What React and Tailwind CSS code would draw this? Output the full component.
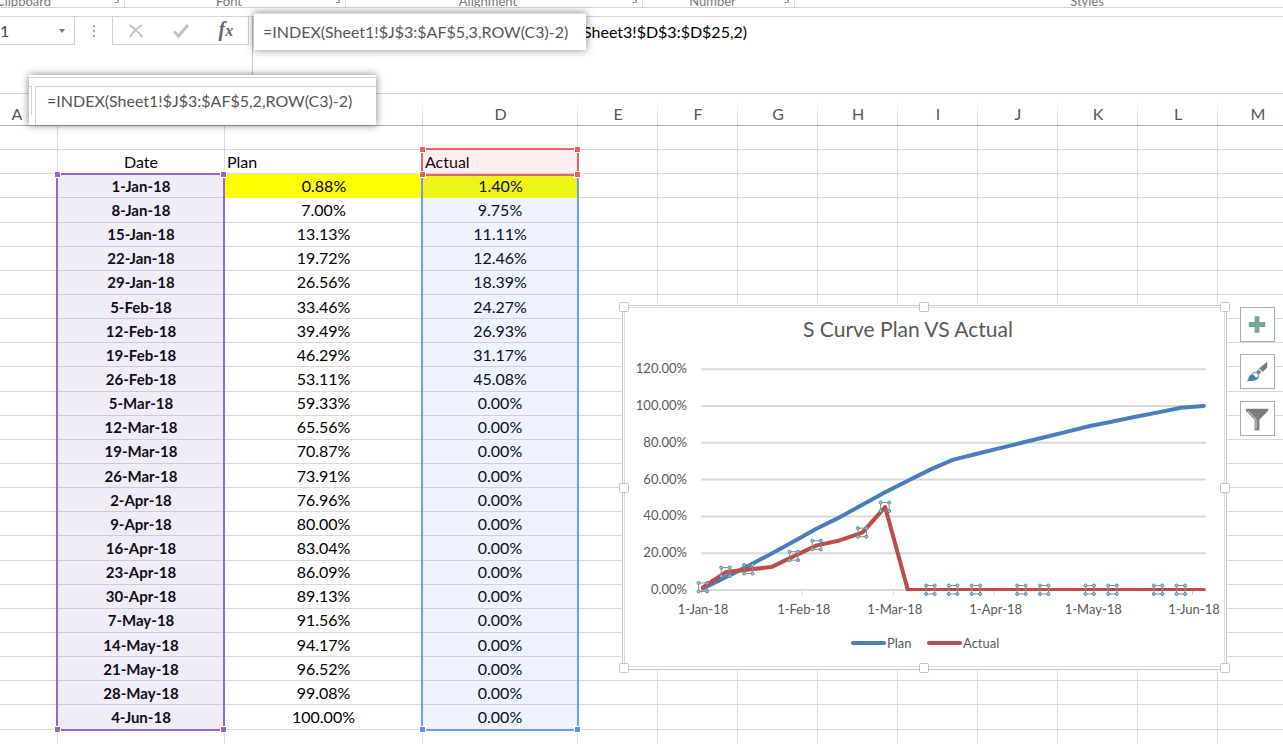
import React from 'react';

const rows = [
  ['1-Jan-18', 0.88, 1.4],
  ['8-Jan-18', 7.0, 9.75],
  ['15-Jan-18', 13.13, 11.11],
  ['22-Jan-18', 19.72, 12.46],
  ['29-Jan-18', 26.56, 18.39],
  ['5-Feb-18', 33.46, 24.27],
  ['12-Feb-18', 39.49, 26.93],
  ['19-Feb-18', 46.29, 31.17],
  ['26-Feb-18', 53.11, 45.08],
  ['5-Mar-18', 59.33, 0],
  ['12-Mar-18', 65.56, 0],
  ['19-Mar-18', 70.87, 0],
  ['26-Mar-18', 73.91, 0],
  ['2-Apr-18', 76.96, 0],
  ['9-Apr-18', 80.0, 0],
  ['16-Apr-18', 83.04, 0],
  ['23-Apr-18', 86.09, 0],
  ['30-Apr-18', 89.13, 0],
  ['7-May-18', 91.56, 0],
  ['14-May-18', 94.17, 0],
  ['21-May-18', 96.52, 0],
  ['28-May-18', 99.08, 0],
  ['4-Jun-18', 100.0, 0],
];

const columns = ['A', 'B', 'C', 'D', 'E', 'F', 'G', 'H', 'I', 'J', 'K', 'L', 'M'];
const emptyColumns = columns.slice(4);
// B and C sit under the formula callout
const coveredColumns = ['B', 'C'];
const cell = 'border-r border-b border-[#d9d9d9] p-0';

const Launcher = () => (
  <svg className="w-2 h-2 shrink-0" viewBox="0 0 8 8" fill="none" stroke="#999">
    <path d="M3 -1l3 3M6.500 -1v4.500H3" />
  </svg>
);

const Ribbon = () => (
  <div className="flex h-2 items-end overflow-hidden border-b border-[#d2d2d2] text-[13px] leading-3 text-[#777]">
    <div className="flex w-[125px] shrink-0 items-end justify-between border-r border-[#ddd] pr-1">
      <span className="-ml-1">Clipboard</span>
      <Launcher />
    </div>
    <div className="flex w-[221px] shrink-0 items-end border-r border-[#ddd] pr-1">
      <span className="flex-1 text-center">Font</span>
      <Launcher />
    </div>
    <div className="flex w-[297px] shrink-0 items-end border-r border-[#ddd] pr-1">
      <span className="flex-1 text-center">Alignment</span>
      <Launcher />
    </div>
    <div className="flex w-[152px] shrink-0 items-end border-r border-[#ddd] pr-1">
      <span className="flex-1 text-center">Number</span>
      <Launcher />
    </div>
    <div className="flex-1 pl-24 text-center">Styles</div>
  </div>
);

const FormulaBar = () => (
  <div className="mt-2 flex h-[78px] items-start border-t border-b border-[#d2d2d2]">
    <div className="flex h-7 w-[75px] shrink-0 items-center justify-between border-r border-b border-[#d2d2d2] pr-2">
      <input aria-label="Name box" defaultValue="1" className="w-10 text-base text-[#444] outline-none" />
      <button aria-label="Show names">
        <svg className="h-2 w-2" viewBox="0 0 8 8">
          <path d="M1 2h6L4 6z" fill="#777" />
        </svg>
      </button>
    </div>
    <div className="flex h-7 w-[37px] shrink-0 flex-col items-center justify-center gap-[3px]">
      <span className="h-0.5 w-0.5 bg-[#aaa]" />
      <span className="h-0.5 w-0.5 bg-[#aaa]" />
      <span className="h-0.5 w-0.5 bg-[#aaa]" />
    </div>
    <div className="flex h-7 w-[137px] shrink-0 items-center justify-around border-x border-b border-[#d2d2d2]">
      <button aria-label="Cancel">
        <svg className="h-4 w-4" viewBox="0 0 16 16" fill="none" stroke="#c3c3c3" strokeWidth="2">
          <path d="M1.500 2C6 5 11 10 14.500 14M14 2C9 5 5 9 2 14" />
        </svg>
      </button>
      <button aria-label="Enter">
        <svg className="h-4 w-4" viewBox="0 0 16 16" fill="none" stroke="#c3c3c3" strokeWidth="3">
          <path d="M1 8.500l4.500 4.500L15 2" />
        </svg>
      </button>
      <button
        aria-label="Insert function"
        className="font-['Liberation_Serif',_serif] text-xl leading-5 font-bold text-[#666] italic"
      >
        f<span className="text-base">x</span>
      </button>
    </div>
    <div className="ml-[3px] h-[58px] flex-1 border-l border-[#c8c8c8]">
      <input
        aria-label="Formula"
        defaultValue="Sheet3!$D$3:$D$25,2)"
        className="h-7 w-full pl-[330px] text-base text-black outline-none"
      />
    </div>
  </div>
);

const Handle = ({ className }) => <span className={`absolute h-[5px] w-[5px] outline outline-white ${className}`} />;

const Range = ({ className, handle, corners }) => (
  <div className={`pointer-events-none absolute border-2 ${className}`}>
    {corners.includes('tl') && <Handle className={`-top-[3px] -left-[3px] ${handle}`} />}
    {corners.includes('tr') && <Handle className={`-top-[3px] -right-[3px] ${handle}`} />}
    {corners.includes('bl') && <Handle className={`-bottom-[3px] -left-[3px] ${handle}`} />}
    {corners.includes('br') && <Handle className={`-right-[3px] -bottom-[3px] ${handle}`} />}
  </div>
);

const Sheet = () => (
  <table className="h-[660px] w-[1298px] min-w-full table-fixed border-separate border-spacing-0 text-base leading-5 text-black">
    <colgroup>
      <col className="w-[58px]" />
      <col className="w-[167px]" />
      <col className="w-[198px]" />
      <col className="w-[155px]" />
      {emptyColumns.map((name) => (
        <col key={name} />
      ))}
    </colgroup>
    <thead>
      <tr className="h-8">
        {columns.map((name) => (
          <th
            key={name}
            className={`relative border-b border-[#ababab] p-0 pt-2 font-normal text-[#555] ${name === 'A' ? 'pr-6' : ''}`}
          >
            {!coveredColumns.includes(name) && name}
            <span className="absolute right-0 bottom-0 h-6 w-px bg-linear-to-b from-white to-[#ccc]" />
          </th>
        ))}
      </tr>
    </thead>
    <tbody>
      <tr className="h-6">
        {columns.map((name) => (
          <td key={name} className={cell} />
        ))}
      </tr>
      <tr className="h-6">
        <td className={cell} />
        <td className={`${cell} text-center`}>Date</td>
        <td className={`${cell} pl-[2px]`}>Plan</td>
        <td className={`${cell} pl-[2px]`}>Actual</td>
        {emptyColumns.map((name) => (
          <td key={name} className={cell} />
        ))}
      </tr>
      {rows.map(([date, plan, actual], i) => (
        <tr key={date} className="h-6">
          <td className={cell} />
          <td className={`${cell} text-center text-[15px] font-bold`}>{date}</td>
          <td className={`p-0 text-center ${i === 0 ? 'bg-[#ffff00]' : 'border-r border-b border-[#d9d9d9]'}`}>
            {plan.toFixed(2)}%
          </td>
          <td className={`p-0 text-center ${i === 0 ? 'bg-[#ffff00]' : 'border-r border-b border-[#d9d9d9]'}`}>
            {actual.toFixed(2)}%
          </td>
          {emptyColumns.map((name) => (
            <td key={name} className={cell} />
          ))}
        </tr>
      ))}
      <tr className="h-6">
        {columns.map((name) => (
          <td key={name} className={cell} />
        ))}
      </tr>
    </tbody>
  </table>
);

const toX = (i) => 703 + i * 7 * 3.252;
const toY = (value) => 590 - value * 1.84;
const line = (key) => rows.map((row, i) => `${toX(i)},${toY(row[key])}`).join(' ');

// points that show selection marks when the Actual series is selected
const marked = [0, 1, 2, 4, 5, 7, 8, 10, 11, 12, 14, 15, 17, 18, 20, 21];
const months = [
  ['1-Jan-18', 0],
  ['1-Feb-18', 31],
  ['1-Mar-18', 59],
  ['1-Apr-18', 90],
  ['1-May-18', 120],
  ['1-Jun-18', 151],
];
const corners = [
  [-4.5, -4.5],
  [4, -4.5],
  [-4.5, 4],
  [4, 4],
];
const grips = [
  [624, 307],
  [924, 307],
  [1225, 307],
  [624, 488],
  [1225, 488],
  [624, 668],
  [924, 668],
  [1225, 668],
];

const Chart = () => (
  <svg
    className="absolute top-[301px] left-[618px] h-[374px] w-[614px]"
    viewBox="618 301 614 374"
    fontFamily="Lato, sans-serif"
    fill="#595959"
  >
    <rect x="621.5" y="304.5" width="606" height="366" fill="#fff" />
    <rect x="622.5" y="305.5" width="604" height="364" fill="#fff" stroke="#c6c6c6" />
    <rect x="624.5" y="307.5" width="600" height="359" fill="#fff" stroke="#dcdcdc" />
    <text x="908" y="337" textAnchor="middle" fontSize="21">
      S Curve Plan VS Actual
    </text>
    {[0, 20, 40, 60, 80, 100, 120].map((value) => (
      <g key={value}>
        <path d={`M701 ${toY(value)}H1206`} stroke="#d9d9d9" strokeWidth="2" />
        <text x="687" y={toY(value) + 4} textAnchor="end" fontSize="13">
          {value.toFixed(2)}%
        </text>
      </g>
    ))}
    {months.map(([label, day]) => (
      <g key={label}>
        <path d={`M${701.5 + day * 3.252} 591v4`} stroke="#d0d0d0" />
        <text x={703 + day * 3.252} y="614" textAnchor="middle" fontSize="13">
          {label}
        </text>
      </g>
    ))}
    <clipPath id="plot">
      <rect x="700" y="360" width="508" height="231" />
    </clipPath>
    <g fill="none" strokeWidth="4" strokeLinecap="round" strokeLinejoin="round" clipPath="url(#plot)">
      <polyline points={line(1)} stroke="#4a7ebb" />
      <polyline points={line(2)} stroke="#be4b48" />
    </g>
    {marked.map((i) => (
      <g key={i} transform={`translate(${toX(i)} ${toY(rows[i][2])})`} stroke="#5585a6">
        <rect x="-4.500" y="-4.500" width="8.500" height="8.500" fill="none" stroke="#8a8a8a" />
        {corners.map(([x, y]) => (
          <circle key={`${x} ${y}`} cx={x} cy={y} r="1.500" fill="#a9cbe6" />
        ))}
      </g>
    ))}
    <g strokeWidth="4" strokeLinecap="round">
      <path d="M853 643h31" stroke="#4a7ebb" />
      <path d="M929 643h31" stroke="#be4b48" />
    </g>
    <text x="887" y="648" fontSize="13">
      Plan
    </text>
    <text x="963" y="648" fontSize="13">
      Actual
    </text>
    {grips.map(([x, y]) => (
      <rect key={`${x} ${y}`} x={x - 4.5} y={y - 4.5} width="9" height="9" rx="1" fill="#fff" stroke="#c6c6c6" />
    ))}
  </svg>
);

const ChartButtons = () => (
  <div className="absolute top-[307px] left-[1240px] flex flex-col gap-3">
    <button aria-label="Chart elements" className="h-[35px] w-[35px] border border-[#ababab] bg-white">
      <svg viewBox="0 0 34 34">
        <path d="M14 8.500h5v6h6v5h-6v6h-5v-6H8v-5h6z" fill="#74a892" />
      </svg>
    </button>
    <button aria-label="Chart styles" className="h-[35px] w-[35px] border border-[#ababab] bg-white">
      <svg viewBox="0 0 34 34">
        <path d="M27 7v6l-4.500 4.500-4-3.500z" fill="#7b7b7b" />
        <path d="M18 15l3 3-2.500 2-3-3z" fill="#7b7b7b" />
        <circle cx="14.500" cy="21.500" r="3.500" fill="#fff" stroke="#4a7ebb" />
        <path d="M9 21c3-2 5 0 6 2 1 1 2 0 3-1 0 4-3 5-12 5 2-2 2-5 3-6z" fill="#4a7ebb" />
      </svg>
    </button>
    <button aria-label="Chart filters" className="h-[35px] w-[35px] border border-[#ababab] bg-white">
      <svg viewBox="0 0 34 34">
        <path d="M5 7h23v2l-9 9v11h-5V18L5 9z" fill="#7b7b7b" />
        <path d="M7 9l8.500 8.500V28" fill="none" stroke="#ddd" />
      </svg>
    </button>
  </div>
);

const App = () => {
  return (
    <div className="relative h-screen overflow-hidden bg-white font-['Lato',_sans-serif]">
      <Ribbon />
      <FormulaBar />
      <Sheet />

      <Range
        className="top-[173px] left-[56px] h-[558px] w-[169px] border-[#9368c6] bg-[#8a69bc]/12"
        handle="bg-[#9368c6]"
        corners={['tl', 'tr', 'bl', 'br']}
      />
      <Range
        className="top-[174px] left-[421px] h-[557px] w-[158px] border-[#6e9bee] bg-[#5b8ceb]/10"
        handle="bg-[#5b8ceb]"
        corners={['bl', 'br']}
      />
      <Range
        className="top-[148px] left-[421px] h-[28px] w-[158px] border-[#ea6063] bg-[#ea6063]/10"
        handle="bg-[#ea6063]"
        corners={['tl', 'tr', 'bl', 'br']}
      />

      <div className="absolute top-[13px] left-[254px] h-[37px] w-[332px] border-t border-[#ddd] bg-white pl-[9px] text-base leading-9 text-[#555] shadow-[0_0_8px_rgba(0,0,0,0.5)]">
        =INDEX(Sheet1!$J$3:$AF$5,3,ROW(C3)-2)
      </div>
      <div className="absolute top-[75px] left-[29px] h-[50px] w-[347px] bg-white pt-0.5 shadow-[0_0_8px_rgba(0,0,0,0.5)]">
        <div className="flex h-12 border-t border-[#d2d2d2] pt-2">
          <div className="h-[29px] w-[3px] border-t border-r border-[#d2d2d2]" />
          <div className="ml-[3px] flex-1 border-t border-l border-[#d2d2d2] pl-[11px] text-base leading-7 text-[#555]">
            =INDEX(Sheet1!$J$3:$AF$5,2,ROW(C3)-2)
          </div>
        </div>
      </div>

      <Chart />
      <ChartButtons />
    </div>
  );
};

export default App;
